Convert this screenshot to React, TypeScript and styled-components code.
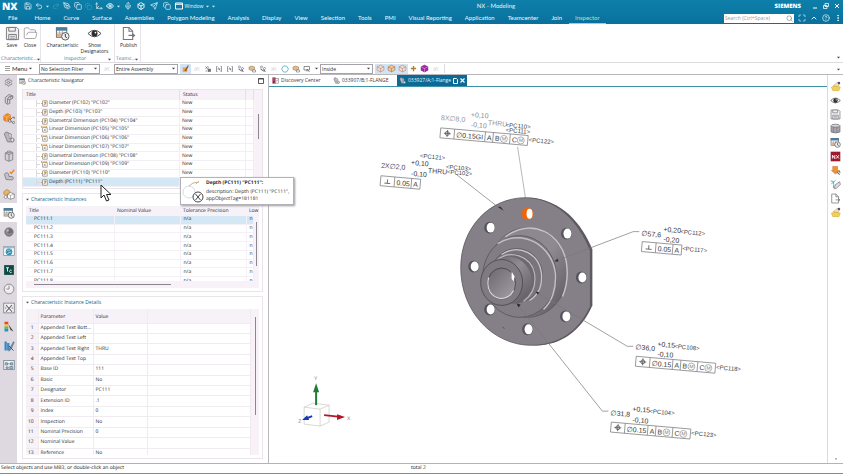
import React from "react";
import styled, { createGlobalStyle, css } from "styled-components";
import {
  Box,
  Copy,
  Eye,
  FolderOpen,
  Maximize,
  Mic,
  Move3d,
  PenTool,
  Redo2,
  Save,
  Search,
  Send,
  Settings,
  Undo2,
  ChevronUp,
  CircleHelp,
  MoreVertical,
} from "lucide-react";

/* ---------- base ---------- */

const UI = `"Open Sans", "Noto Sans", sans-serif`;
const BAR = `Lato, "Open Sans", sans-serif`;
const BLUE = "#0b77a3";

const Global = createGlobalStyle`
  * { box-sizing: border-box; }
  html, body { margin: 0; padding: 0; }
  body {
    background: #fff;
    color: #2b292d;
    font: 5px/9px ${UI};
    text-rendering: geometricPrecision;
    overflow: hidden;
  }
  button, input, select { font: inherit; color: inherit; margin: 0; padding: 0; border: 0; background: none; border-radius: 0; }
  table { border-collapse: collapse; border-spacing: 0; }
  svg { display: block; flex: none; }
`;

const Page = styled.div`
  height: 100vh;
  display: flex;
  flex-direction: column;
`;

const Caret = ({ size = 3, color = "#444" }: { size?: number; color?: string }) => (
  <svg width={size} height={size} viewBox="0 0 6 6">
    <path d="M0 1.5H6L3 5Z" fill={color} />
  </svg>
);

/* ---------- small drawings ---------- */

const glyphs: Record<string, React.ReactNode> = {
  part: (
    <g fill="#b9b6bb" stroke="#77747a" strokeWidth="1">
      <path d="M2 5a3 3 0 0 1 6-1l1 6 4 0a2.4 2.4 0 0 1 0 4.6L6 14.500Z" />
      <path d="M8 3l3 1v5l-2 1" fill="#dedbe0" />
      <ellipse cx="12.500" cy="12" rx="2" ry="2.400" fill="#eee" />
    </g>
  ),
  bracket: (
    <g fill="#d4d1d6" stroke="#6e6b70" strokeWidth="1">
      <path d="M3 6l5-4 5 2v3l-4 2v5l-3 1-3-2z" />
      <path d="M8 5l5-1M6 8v6M9 9l-3-1 2-3" fill="none" />
      <circle cx="11" cy="6" r="1.300" fill="#fff" />
    </g>
  ),
  orange: (
    <g>
      <path d="M1 5l5-3 4 2v6l-5 3-4-2z" fill="#f08a1d" stroke="#c96a10" strokeWidth=".7" />
      <path d="M1 5l4 2 5-3M5 7v6" stroke="#ffd09a" strokeWidth=".8" fill="none" />
      <path d="M9 11l4-4M13 7h2v2M10 12l4 3" stroke="#666" strokeWidth="1.200" fill="none" />
      <circle cx="9" cy="12" r="1.700" fill="#eee" stroke="#666" />
      <circle cx="14" cy="14" r="1.400" fill="#eee" stroke="#666" />
    </g>
  ),
  clip: (
    <g stroke="#77747a" fill="#d2cfd4">
      <path d="M3 4l4-2 6 1v10l-5 2-5-2z" />
      <path d="M3 4l5 2v9M8 6l5-2" fill="none" />
      <path d="M6 1.500h4v2H6z" fill="#eee" />
    </g>
  ),
  partCheck: (
    <g>
      <path d="M2 7a3 3 0 0 1 5-1l1 4 4 0a2.400 2.400 0 0 1 0 4.600L4 14Z" fill="#c4c1c6" stroke="#77747a" />
      <path d="M9 4l2 2 4-5" stroke="#e8862a" strokeWidth="1.800" fill="none" />
    </g>
  ),
  cubes: (
    <g strokeWidth=".8">
      <path d="M1 5l4-3 4 2v4l-4 2-4-2z" fill="#e8b765" stroke="#a47b35" />
      <path d="M6 8l4-2 5 2v5l-5 2-4-2z" fill="#fff" stroke="#666" />
      <path d="M6 8l4 2 5-2M10 10v5" fill="none" stroke="#888" />
      <circle cx="3.500" cy="12" r="2" fill="#fff" stroke="#666" />
    </g>
  ),
  charac: (
    <g>
      <rect x="1.500" y="2" width="11" height="10" fill="#fff" stroke="#66686c" />
      <rect x="1" y="1.500" width="12" height="3.500" fill="#4b7c98" />
      <path d="M2 7.500h10M5 5v7M8 5v7" stroke="#999" strokeWidth=".8" />
      <path d="M2 8.500h5v3H2z" fill="#dcae8a" />
      <circle cx="11" cy="11" r="4" fill="#f1f0f2" stroke="#55575c" />
      <path d="M11 8.500V11.500l1.700 1" stroke="#333" fill="none" />
    </g>
  ),
  sphere: (
    <g>
      <circle cx="8" cy="8" r="5.500" fill="#8b888e" stroke="#5c5a60" />
      <circle cx="9" cy="7" r="3" fill="#6d6b70" />
      <circle cx="6.200" cy="6" r="1.600" fill="#bbb8bd" />
    </g>
  ),
  globe: (
    <g>
      <rect x="1" y="2" width="14" height="12" fill="#fff" stroke="#7f8a92" />
      <rect x="1" y="2" width="14" height="2.500" fill="#a9b9c3" />
      <circle cx="8" cy="9" r="4.500" fill="#2c8fb8" />
      <path d="M5 8c2-3 3 1 5-2M6 12c1-3 3-1 5-3" stroke="#bfe3d0" fill="none" strokeWidth="1.200" />
    </g>
  ),
  tc: (
    <g>
      <rect x="1.500" y="1.500" width="13" height="13" fill="#0d4a44" />
      <path d="M4 5h4M6 5v5M11.500 8.500a1.700 1.700 0 1 0 0 2.600" stroke="#dff2ef" strokeWidth="1.300" fill="none" />
    </g>
  ),
  clock: (
    <g fill="none" stroke="#77747a">
      <circle cx="8" cy="8" r="6.500" fill="#efedf0" />
      <path d="M8 3.500V8H4.500" />
    </g>
  ),
  tools: (
    <g fill="none" stroke="#77757b">
      <rect x="1" y="1.500" width="14" height="13" fill="#f3f1f4" />
      <path d="M4 4l8 9M12 4l-8 9" stroke="#5f5d63" strokeWidth="1.500" />
      <path d="M2.500 8h2M11.500 8h2" strokeWidth="1.500" />
    </g>
  ),
  palette: (
    <g>
      <rect x="2" y="1" width="5" height="3.500" fill="#ee4136" />
      <rect x="2" y="4.500" width="5" height="3" fill="#f3c623" />
      <rect x="2" y="7.500" width="5" height="3" fill="#61bb46" />
      <rect x="2" y="10.500" width="5" height="3.500" fill="#2a8fd0" />
      <path d="M7 4l7 10-4-2z" fill="#444" />
    </g>
  ),
  books: (
    <g>
      <path d="M2 2h3v12H2zM5.500 4h3v10h-3z" fill="#3e86bd" />
      <path d="M14 2L9 11l-1 4 3-3 4-9z" fill="#6d8fa9" stroke="#43647f" strokeWidth=".6" />
      <path d="M8 8l6 6" stroke="#444" strokeWidth="1.200" />
    </g>
  ),
  process: (
    <g fill="#eef1f4" stroke="#6c7d8d">
      <rect x="1" y="2" width="14" height="12" />
      <path d="M3 5h3v3H3zM10 5h3v3h-3zM4 10.500h3v2H4zM9 10h4v3H9z" fill="#a9bccb" />
      <path d="M6 6.500h4" />
    </g>
  ),
  eye: (
    <g>
      <path d="M1 8q7-7 14 0q-7 7-14 0z" fill="#fff" stroke="#444" />
      <circle cx="8" cy="8" r="3.200" fill="#2c2c2f" />
      <circle cx="9" cy="7" r=".9" fill="#fff" />
    </g>
  ),
  hand: (
    <g>
      <path d="M2 9l6-3 7 3-2 5H4z" fill="#f2cf58" stroke="#c59b2c" strokeWidth=".6" />
      <path d="M5 7l5-5 4 2-3 4z" fill="#f8e6a0" stroke="#a98c4a" strokeWidth=".7" />
      <circle cx="13" cy="3" r="1.800" fill="#4d4f8e" />
    </g>
  ),
  disk: (
    <g fill="#f0eff1" stroke="#77757a">
      <path d="M1.500 1.500h11l2 2v11h-13z" />
      <path d="M4 1.500h7v4H4zM4 9h8v5.500H4z" />
      <path d="M5.500 11h5M5.500 13h5" strokeWidth=".8" />
    </g>
  ),
  cyl: (
    <g fill="#a7a5aa" stroke="#6a686d">
      <path d="M1.500 4v9q6.500 3 13 0V4" />
      <ellipse cx="8" cy="4" rx="6.500" ry="2.200" fill="#d6d4d8" />
      <path d="M5 6v8M10 6v8" strokeWidth=".7" />
    </g>
  ),
  nx: (
    <g>
      <rect x="1" y="1" width="14" height="14" fill="#9c1c2c" />
      <path d="M3.500 11V6l3.500 5V6M9 6l4 5M13 6l-4 5" stroke="#fff" strokeWidth="1.300" fill="none" />
    </g>
  ),
  orangeArrow: (
    <g>
      <path d="M4 2h7v6h3l-6 5-6-5h2z" fill="#ef9433" stroke="#b96a1c" strokeWidth=".7" />
      <path d="M10 10l4 4M13 9l2 2" stroke="#666" strokeWidth="1.500" />
    </g>
  ),
  sketch: (
    <g fill="none">
      <path d="M1 3q6-2 4 10M2 7l6-5" stroke="#3aa6b5" strokeWidth="1.300" />
      <path d="M8 8l6-4 1 4-6 6-3 0z" fill="#dcdade" stroke="#77757a" />
    </g>
  ),
  doc: (
    <g fill="#fff" stroke="#77757a" strokeWidth="1.100">
      <path d="M2.500 1.500h6l4 4v9h-10z" />
      <path d="M8.500 1.500v4h4M8 10h6M12 8l2.500 2-2.500 2" fill="none" />
    </g>
  ),
  disc: (
    <g>
      <rect x="1" y="1" width="7" height="14" fill="#8e2743" />
      <rect x="8" y="3" width="7" height="11" fill="#fff" stroke="#555" />
      <path d="M3 4h3M3 7h3M6 12l6-6M12 6v4" stroke="#e9c8d0" strokeWidth="1.200" />
      <path d="M9 11l4-5" stroke="#444" />
    </g>
  ),
  dim: (
    <g fill="none">
      <rect x="4" y="2" width="10" height="12" fill="#fff" stroke="#6b5f4d" strokeWidth="1.200" />
      <path d="M0 8h4M11 1l-4 5h5l-4 6" stroke="#c08a3c" strokeWidth="1.600" />
      <path d="M6 12l5-7" stroke="#555" strokeWidth="1.100" />
    </g>
  ),
  dimLinear: (
    <g fill="none">
      <rect x="4" y="4" width="10" height="10" fill="#fff" stroke="#6b5f4d" strokeWidth="1.200" />
      <path d="M1 2h12M1 0v5M13 0v4" stroke="#d19a3b" strokeWidth="1.600" />
      <path d="M6 12l5-6M7 7l4 5" stroke="#555" strokeWidth="1.100" />
    </g>
  ),
  cube: (
    <g strokeWidth="1">
      <path d="M2 5l6-3 6 3v6l-6 3-6-3z" fill="#f3dccf" stroke="#a08576" />
      <path d="M2 5l6 3 6-3M8 8v6" fill="none" stroke="#a08576" />
    </g>
  ),
  cubeOrange: (
    <g>
      <path d="M2 5l6-3 6 3v6l-6 3-6-3z" fill="#f6c98f" stroke="#8a7668" />
      <path d="M2 5l6 3 6-3M8 8v6" fill="none" stroke="#8a7668" />
    </g>
  ),
  cubePurple: (
    <g>
      <path d="M2 5l6-3 6 3v6l-6 3-6-3z" fill="#a326a8" stroke="#5c1260" />
      <path d="M2 5l6 3 6-3M8 8v6" fill="none" stroke="#e9a9ec" />
    </g>
  ),
  plus: <path d="M8 2v12M2 8h12" stroke="#b07b35" strokeWidth="3" />,
  faint: <path d="M2 10h5V6h6M3 6h3M9 10h4" stroke="#cfcdd1" strokeWidth="1.500" fill="none" />,
  brush: (
    <g>
      <path d="M3 6h8v8H3z" fill="#f1a04a" />
      <path d="M6 12l6-10 2 1-5 10z" fill="#8a6038" />
    </g>
  ),
  pick: (
    <g fill="none" stroke="#66646a" strokeWidth="1.300">
      <path d="M3 3l6 6M3 8l4-5 3 2" />
      <path d="M8 8h5v5H8z" fill="#77757a" />
      <path d="M3 12h3" />
    </g>
  ),
  span: (
    <g fill="none" stroke="#66646a" strokeWidth="1.300">
      <path d="M5 3H3v10h2M11 3h2v10h-2M5 8h6M7 5l3 6" />
    </g>
  ),
  pickNodes: (
    <g fill="none" stroke="#66646a" strokeWidth="1.200">
      <circle cx="5" cy="4" r="2" />
      <circle cx="11" cy="7" r="2" />
      <path d="M3 8l8 5M9 9l4 4" strokeWidth="2" />
    </g>
  ),
  hex: <path d="M5 2h6l4 6-4 6H5L1 8z" fill="#fff" stroke="#3fa9c6" strokeWidth="1.500" />,
  boxDown: (
    <g>
      <path d="M2 4l5-2 6 2v5l-5 2-6-2z" fill="#e6bd85" stroke="#886b45" />
      <path d="M9 10h6v4H9z" fill="#fff" stroke="#555" />
    </g>
  ),
  lasso: (
    <g fill="#fff" stroke="#555" strokeWidth="1.300">
      <path d="M2 3h11v7H2z" />
      <path d="M8 8l5 6M8 8v5" />
    </g>
  ),
};

const Glyph = ({ name, size }: { name: string; size: number }) => (
  <svg width={size} height={size} viewBox="0 0 16 16" aria-hidden="true">
    {glyphs[name]}
  </svg>
);

/* ---------- title bar ---------- */

const Header = styled.header`
  background: linear-gradient(#0d7fa9, ${BLUE} 60%, #0a6f9c);
  color: #e8f6fb;
  font-family: ${BAR};
  font-size: 6px;
`;

const TitleBar = styled.div`
  height: 12px;
  display: grid;
  grid-template-columns: 19fr auto 13fr;
  align-items: center;
  padding: 0 3px 0 2px;
`;

const Quick = styled.div`
  display: flex;
  align-items: center;
  gap: 3px;
`;

const Logo = styled.span`
  font: 800 10px/11px "Open Sans", sans-serif;
  color: #fff;
  margin-right: 3px;
`;

const IconButton = styled.button<{ $dim?: boolean; $wide?: boolean }>`
  display: flex;
  align-items: center;
  gap: 2px;
  padding: ${(p) => (p.$wide ? "0 1px" : "0")};
  opacity: ${(p) => (p.$dim ? 0.25 : 1)};
`;

const QuickLabel = styled.span`
  font: 5px/9px ${UI};
`;

const WindowButtons = styled.div`
  display: flex;
  justify-content: flex-end;
  align-items: center;
  gap: 5px;
`;

const Siemens = styled.span`
  font: 800 6px/9px "Open Sans", sans-serif;
  color: #fff;
  margin-right: 6px;
`;

const MenuBar = styled.nav`
  height: 12px;
  display: flex;
  align-items: stretch;
  gap: 1px;
  padding-left: 2px;
`;

const MenuTab = styled.button<{ $active?: boolean }>`
  padding: 0 6px;
  line-height: 11px;
  border-bottom: 1px solid ${(p) => (p.$active ? "#a9cfa5" : "transparent")};
  color: ${(p) => (p.$active ? "#c9dcae" : "#eef8fb")};
  white-space: nowrap;
  &:first-child {
    padding-right: 10px;
  }
`;

const MenuTools = styled.div`
  margin-left: auto;
  display: flex;
  align-items: center;
  gap: 4px;
  padding-right: 1px;
`;

const SearchBox = styled.label`
  display: flex;
  align-items: center;
  width: 70px;
  height: 9px;
  background: #fff;
  color: #777;
  padding: 0 1px;
  input {
    flex: 1;
    min-width: 0;
    height: 8px;
    font: 5px/8px ${UI};
    outline: none;
  }
  input::placeholder {
    color: #9b9b9b;
    opacity: 1;
  }
`;

const menu = [
  "File", "Home", "Curve", "Surface", "Assemblies", "Polygon Modeling", "Analysis", "Display", "View",
  "Selection", "Tools", "PMI", "Visual Reporting", "Application", "Teamcenter", "Join", "Inspector",
];

/* ---------- ribbon ---------- */

const Ribbon = styled.div`
  display: flex;
  height: 39px;
  border-bottom: 1px solid #dddbdf;
  padding-right: 3px;
`;

const Group = styled.section<{ $w: number }>`
  width: ${(p) => p.$w}px;
  display: flex;
  flex-direction: column;
  border-right: 1px solid #e6e4e8;
  padding-top: 2px;
`;

const GroupItems = styled.div`
  flex: 1;
  display: flex;
  justify-content: center;
  align-items: flex-start;
  padding-left: 2px;
`;

const Tool = styled.button<{ $w: number }>`
  width: ${(p) => p.$w}px;
  display: flex;
  flex-direction: column;
  align-items: center;
  line-height: 6px;
  gap: 1px;
`;

const GroupLabel = styled.div`
  display: flex;
  align-items: center;
  height: 6px;
  padding: 0 3px 0 1px;
  color: #3a7b9b;
  line-height: 6px;
  span {
    flex: 1;
    text-align: center;
    white-space: nowrap;
  }
`;

const RibbonEnd = styled.button`
  margin-left: auto;
  align-self: flex-end;
  padding-bottom: 3px;
`;

/* ---------- selection bar ---------- */

const SelectionBar = styled.div`
  display: flex;
  align-items: center;
  height: 12px;
  padding: 0 3px 0 5px;
  border-bottom: 1px solid #b9b7bc;
`;

const MenuButton = styled.button`
  display: flex;
  align-items: center;
  gap: 2px;
  width: 34px;
  font-size: 6px;
  font-family: ${BAR};
`;

const SelectWrap = styled.span<{ $w: number }>`
  width: ${(p) => p.$w}px;
  display: grid;
  align-items: center;
  border: 1px solid #a5a3a8;
  height: 10px;
  background: #fff;
  select,
  svg {
    grid-area: 1 / 1;
  }
  select {
    appearance: none;
    width: 100%;
    height: 8px;
    line-height: 8px;
    padding: 0 8px 0 1px;
    outline: none;
  }
  svg {
    justify-self: end;
    margin-right: 2px;
    pointer-events: none;
  }
`;

const Pick = styled.button<{ $on?: boolean; $w?: number }>`
  width: ${(p) => p.$w ?? 11}px;
  height: 10px;
  display: flex;
  align-items: center;
  justify-content: center;
  background: ${(p) => (p.$on ? "#d3e3f3" : "none")};
`;

const Divider = styled.span`
  width: 1px;
  height: 9px;
  background: #dddbdf;
  margin-left: 3px;
`;

/* ---------- body ---------- */

const Work = styled.div`
  flex: 1;
  min-height: 0;
  display: flex;
`;

const Rail = styled.nav`
  width: 17px;
  background: #ded8e0;
  display: flex;
  flex-direction: column;
`;

const RailButton = styled.button<{ $active?: boolean }>`
  height: 19px;
  display: flex;
  align-items: center;
  justify-content: center;
  background: ${(p) => (p.$active ? "#fff" : "none")};
`;

const RailTop = styled(RailButton)`
  height: 14px;
`;

const Panel = styled.aside`
  width: 252px;
  position: relative;
  display: flex;
  flex-direction: column;
  border-right: 1px solid #b9b7bc;
`;

const PanelHead = styled.div`
  display: flex;
  align-items: center;
  gap: 2px;
  height: 12px;
  padding: 0 4px 0 2px;
  h1 {
    flex: 1;
    margin: 0;
    font: inherit;
  }
`;

const PanelBody = styled.div`
  flex: 1;
  min-height: 0;
  display: flex;
  flex-direction: column;
  gap: 4px;
  padding: 2px 5px 4px;
`;

const frame = css`
  border: 1px solid #e9e5ea;
  display: flex;
  flex-direction: column;
`;

const TreeFrame = styled.section`
  ${frame}
  height: 100px;
  overflow: hidden;
`;

const Section = styled.section<{ $grow?: boolean }>`
  ${frame}
  padding: 0 3px 3px;
  min-height: 0;
  height: ${(p) => (p.$grow ? "auto" : "99px")};
  flex: ${(p) => (p.$grow ? "1" : "none")};
`;

const SectionTitle = styled.button`
  display: flex;
  align-items: flex-start;
  gap: 2px;
  height: 12px;
  line-height: 10px;
  color: #17637f;
  svg {
    margin-top: 4px;
  }
`;

const Clip = styled.div`
  flex: 1;
  min-height: 0;
  overflow: hidden;
  display: flex;
  align-items: flex-start;
  background: #f8f2f8;
`;

const cell = css`
  overflow: hidden;
  white-space: nowrap;
  text-align: left;
  font-weight: 400;
  padding: 0 3px;
  line-height: 7px;
`;

const Sheet = styled.table`
  flex: 1;
  width: 100%;
  min-width: 0;
  table-layout: fixed;
`;

const Tree = styled(Sheet)`
  height: 106px;
  thead th {
    ${cell}
    height: 10px;
    background: #f7f1f8;
    border-right: 1px solid #e6dfe8;
  }
  td {
    ${cell}
    padding: 0 2px;
    background: #fff;
    border-bottom: 1px solid #f2eef3;
    border-right: 1px solid #f2eef3;
  }
`;

const TreeCell = styled.span`
  display: flex;
  align-items: center;
  gap: 1px;
  margin-left: 11px;
  border-left: 1px solid #dcd9de;
  height: 7px;
  &::before {
    content: "";
    width: 3px;
    height: 1px;
    background: #dcd9de;
  }
`;

const Row = styled.tr<{ $sel?: boolean }>`
  ${(p) => p.$sel && css`&& td { background: #d3e7f5; }`}
`;

const InstanceTable = styled(Sheet)`
  height: 80px;
  th {
    ${cell}
    overflow: visible;
    height: 10px;
    padding-top: 1px;
    background: #f7f1f8;
  }
  td {
    ${cell}
    background: #fff;
    border-bottom: 1px solid #f4f0f5;
    border-right: 1px solid #f4f0f5;
  }
  td:first-child {
    padding-left: 8px;
  }
`;

const DetailTable = styled(Sheet)`
  height: 150px;
  th,
  td {
    ${cell}
    padding: 0 2px;
    border-bottom: 1px solid #f0ebf1;
    border-right: 1px solid #f0ebf1;
  }
  thead th {
    height: 14px;
    padding-top: 4px;
    background: #f7f1f8;
  }
  tbody th {
    text-align: right;
    background: #f7f1f8;
    padding-right: 4px;
  }
  td {
    background: #fff;
  }
`;

const VTrack = styled.div<{ $w: number; $top: number }>`
  width: ${(p) => p.$w}px;
  padding-top: ${(p) => p.$top}px;
  display: flex;
  justify-content: center;
`;

const VThumb = styled.div<{ $h: number }>`
  width: 1px;
  height: ${(p) => p.$h}px;
  background: #8e868f;
`;

const HTrack = styled.div`
  height: 7px;
  background: #f8f2f8;
  padding: 3px 0 0 8px;
`;

const HThumb = styled.div`
  width: 61%;
  height: 1px;
  background: #8e868f;
`;

const Tooltip = styled.div`
  position: absolute;
  left: 163px;
  top: 102px;
  z-index: 2;
  display: flex;
  align-items: center;
  gap: 2px;
  height: 28px;
  padding: 0 4px 0 1px;
  background: #fff;
  border: 1px solid #b4b2b7;
  box-shadow: 1px 1px 2px #9a989d;
  line-height: 7px;
  white-space: nowrap;
  b {
    display: block;
    font-weight: 700;
    margin-bottom: 2px;
  }
`;

const Pointer = styled.svg`
  position: absolute;
  left: 83px;
  top: 109px;
  z-index: 3;
`;

/* ---------- canvas side ---------- */

const Stage = styled.main`
  flex: 1;
  min-width: 0;
  display: flex;
  flex-direction: column;
`;

const DocTabs = styled.div`
  display: flex;
  height: 12px;
  border-bottom: 1px solid #3f93a8;
  padding-left: 1px;
`;

const DocTab = styled.button<{ $active?: boolean; $w: number }>`
  display: flex;
  align-items: center;
  gap: 2px;
  width: ${(p) => p.$w}px;
  padding-left: 2px;
  white-space: nowrap;
  background: ${(p) => (p.$active ? "#0b6a96" : "none")};
  color: ${(p) => (p.$active ? "#e6f3f8" : "#3a383c")};
`;

const Canvas = styled.svg`
  flex: 1;
  min-height: 0;
  width: 100%;
`;

const RightRail = styled.nav`
  width: 16px;
  border-left: 1px solid #dcdadf;
  padding-top: 4px;
  display: flex;
  flex-direction: column;
  align-items: center;
`;

const RightButton = styled.button`
  height: 14px;
  display: flex;
  align-items: center;
`;

const RightMore = styled.button`
  margin-top: auto;
  padding-bottom: 3px;
`;

const StatusBar = styled.footer`
  display: grid;
  grid-template-columns: 410px 1fr;
  height: 11px;
  padding-left: 1px;
  border-top: 1px solid #b4b2b7;
  border-bottom: 1px solid #5d98ad;
  color: #111;
  line-height: 9px;
`;

/* ---------- data ---------- */

const tree: [string, string][] = [
  ['Diameter (PC102) "PC102"', "dim"],
  ['Depth (PC103) "PC103"', "dim"],
  ['Diametral Dimension (PC104) "PC104"', "dim"],
  ['Linear Dimension (PC105) "PC105"', "dimLinear"],
  ['Linear Dimension (PC106) "PC106"', "dimLinear"],
  ['Linear Dimension (PC107) "PC107"', "dimLinear"],
  ['Diametral Dimension (PC108) "PC108"', "dim"],
  ['Linear Dimension (PC109) "PC109"', "dimLinear"],
  ['Diameter (PC110) "PC110"', "dim"],
  ['Depth (PC111) "PC111"', "dim"],
  ["", "dim"],
];

const details: [string, string][] = [
  ["Appended Text Bott...", ""],
  ["Appended Text Left", ""],
  ["Appended Text Right", "THRU"],
  ["Appended Text Top", ""],
  ["Base ID", "111"],
  ["Basic", "No"],
  ["Designator", "PC111"],
  ["Extension ID", ".1"],
  ["Index", "0"],
  ["Inspection", "No"],
  ["Nominal Precision", "0"],
  ["Nominal Value", ""],
  ["Reference", "No"],
];

const leftRail = [
  "bracket", "orange", "part", "clip", "partCheck", "cubes", "charac", "sphere",
  "globe", "tc", "clock", "tools", "palette", "books", "process",
];
const rightRail = ["hand", "eye", "disk", "cyl", "charac", "nx", "orangeArrow", "sketch", "doc", "hand"];

/* ---------- model drawing ---------- */

const Label = styled.text<{ $size?: number; $tone?: string }>`
  font-family: "Liberation Sans", Arial, sans-serif;
  font-size: ${(p) => p.$size ?? 6}px;
  fill: ${(p) => p.$tone ?? "#38383a"};
`;

type FrameCell = { x: number; w: number; text: string; mod?: boolean };

const ToleranceFrame = ({ x, y, symbol, cells }: { x: number; y: number; symbol: "pos" | "perp"; cells: FrameCell[] }) => {
  const last = cells[cells.length - 1];
  return (
    <g transform={`translate(${x} ${y}) rotate(5)`}>
      <rect width={last.x + last.w} height="10" fill="#fff" stroke="#858487" strokeWidth="0.8" />
      <g fill="none" stroke="#555" strokeWidth="0.8">
        {symbol === "pos" ? (
          <>
            <circle cx="7" cy="5" r="2" />
            <path d="M3.500 5h7M7 1.500v7" />
          </>
        ) : (
          <path d="M4 7h6M7 7V3" />
        )}
      </g>
      {cells.map((c) => (
        <g key={c.x}>
          <path d={`M${c.x} 0V10`} stroke="#858487" strokeWidth="0.8" />
          <Label x={c.x + 2} y={8} $size={7}>{c.text}</Label>
          {c.mod && (
            <>
              <circle cx={c.x + 11} cy="5.500" r="3.500" fill="none" stroke="#858487" strokeWidth="0.600" />
              <Label x={c.x + 9} y={7} $size={5} $tone="#77767a">M</Label>
            </>
          )}
        </g>
      ))}
    </g>
  );
};

const perpCells: FrameCell[] = [
  { x: 14, w: 17, text: "0.05" },
  { x: 31, w: 9, text: "A" },
];
const posCells: FrameCell[] = [
  { x: 14, w: 23, text: "∅0.15" },
  { x: 37, w: 8, text: "A" },
  { x: 45, w: 17, text: "B", mod: true },
  { x: 62, w: 18, text: "C", mod: true },
];
const topCells: FrameCell[] = [
  { x: 14, w: 31, text: "∅0.15GI" },
  { x: 45, w: 8, text: "A" },
  { x: 53, w: 17, text: "B", mod: true },
  { x: 70, w: 18, text: "C", mod: true },
];

const Tilted = ({ x, y, size, tone, children }: { x: number; y: number; size?: number; tone?: string; children: string }) => (
  <Label $size={size} $tone={tone} transform={`translate(${x} ${y}) rotate(5)`}>{children}</Label>
);

const holes = [
  [567, 233], [582, 277], [566, 316], [528, 329], [490, 309], [474, 266], [490, 227],
];

const Model = () => (
  <Canvas viewBox="269 86 559 377" role="img" aria-label="Flange model">
    <defs>
      <linearGradient id="tube" x1=".2" y1="0" x2="1" y2=".9">
        <stop offset="0" stopColor="#6f6a72" />
        <stop offset=".4" stopColor="#918c94" />
        <stop offset="1" stopColor="#5d5960" />
      </linearGradient>
      <linearGradient id="bore" x1="0" y1="0" x2="1" y2="1">
        <stop offset="0" stopColor="#6b666e" />
        <stop offset="1" stopColor="#a5a0a8" />
      </linearGradient>
      <linearGradient id="step" x1="0" y1="0" x2="1" y2=".8">
        <stop offset="0" stopColor="#8a858d" />
        <stop offset=".6" stopColor="#8f8a92" />
        <stop offset="1" stopColor="#635e66" />
      </linearGradient>
    </defs>

    <path d="M518 146L526 198" stroke="#9b9a9c" strokeWidth=".7" />

    <path d="M530 197C562 199 582 222 593 249V305C582 330 562 345 536 345Z" fill="#5d5960" />
    <path
      d="M526 197C556 197 579 220 591 250V306C579 332 558 345 532 345C493 345 461 311 461 267C461 228 489 197 526 197Z"
      fill="#858088"
      stroke="#59555c"
      strokeWidth=".8"
    />

    <ellipse cx="528" cy="213" rx="6" ry="6" fill="#f0640c" />
    <ellipse cx="530" cy="213" rx="3" ry="5" fill="#fff" />
    {holes.map(([x, y]) => (
      <g key={`${x}-${y}`}>
        <ellipse cx={x} cy={y} rx="5.500" ry="6" fill="#57535a" />
        <ellipse cx={x + 1} cy={y} rx="4" ry="5" fill="#fff" />
      </g>
    ))}

    <ellipse cx="528" cy="272" rx="40" ry="45" fill="url(#step)" stroke="#57535a" strokeWidth=".7" />
    <path d="M506 236C534 216 562 234 567 262C569 276 567 287 563 296" fill="none" stroke="#c5c1c8" strokeWidth="1.500" />
    <ellipse cx="520" cy="276" rx="37" ry="41" fill="#827d85" stroke="#57535a" strokeWidth=".8" />
    <path d="M498 243C524 227 553 246 556 273C557 289 552 302 544 309" fill="none" stroke="#c2bec5" strokeWidth="1.500" />
    <ellipse cx="517" cy="275" rx="26" ry="27" fill="#79747c" stroke="#57535a" strokeWidth=".7" />
    <path d="M502 254C520 242 540 254 542 273C543 286 538 295 530 300" fill="none" stroke="#c9c5cc" strokeWidth="1.300" />
    <ellipse cx="514" cy="277" rx="22" ry="24" fill="#6c6770" />
    <path d="M497 260C511 248 532 256 535 273C537 286 532 295 524 301" fill="none" stroke="#bcb7bf" strokeWidth="1.200" />
    <path d="M489 264L498 259C514 251 530 262 532 278C533 291 526 299 518 303L507 304Z" fill="url(#tube)" />
    <ellipse cx="502" cy="282" rx="21" ry="23" fill="#7f7a82" stroke="#4d4a50" strokeWidth=".9" />
    <ellipse cx="502" cy="283" rx="14" ry="15.500" fill="url(#bore)" stroke="#403d43" strokeWidth=".8" />
    <path d="M489 277C486 289 492 297 501 298C508 298 512 294 514 290" fill="none" stroke="#e3e0e5" strokeWidth="1.100" />
    <path d="M512 271L515 276L514 281L512 278Z" fill="#fff" />
    <path d="M503 327l2 1" stroke="#57535a" strokeWidth="1" />

    <g fill="none" stroke="#77767a" strokeWidth=".7">
      <path d="M457 174L503 210" />
      <path d="M555 261L634 231H640" />
      <path d="M537 292L628 346H634" />
      <path d="M518 304L603 411H609" />
    </g>
    <g fill="#2c2b2e">
      <path d="M498 206l3 0 3 4z" />
      <path d="M555 261l3-3 1 3z" />
      <path d="M536 291l4 1-2 2z" />
      <path d="M517 303l4 1-2 3z" />
    </g>

    <Tilted x={441} y={119} size={7} tone="#98979a">8X∅8,0</Tilted>
    <Tilted x={471} y={116} size={7} tone="#8d8c8f">+0,10</Tilted>
    <Tilted x={471} y={126} size={7} tone="#8d8c8f">-0,10</Tilted>
    <Tilted x={488} y={124} size={7} tone="#98979a">THRU</Tilted>
    <Tilted x={506} y={126}>{"<PC110>"}</Tilted>
    <Tilted x={506} y={131}>{"<PC111>"}</Tilted>
    <ToleranceFrame x={441} y={127} symbol="pos" cells={topCells} />
    <Tilted x={529} y={141}>{"<PC122>"}</Tilted>

    <Tilted x={420} y={157}>{"<PC121>"}</Tilted>
    <Tilted x={381} y={167} size={7} tone="#48474a">2X∅2,0</Tilted>
    <Tilted x={411} y={164} size={7}>+0,10</Tilted>
    <Tilted x={411} y={175} size={7}>-0,10</Tilted>
    <Tilted x={428} y={172} size={7} tone="#48474a">THRU</Tilted>
    <Tilted x={446} y={168}>{"<PC103>"}</Tilted>
    <Tilted x={447} y={173}>{"<PC102>"}</Tilted>
    <ToleranceFrame x={381} y={175} symbol="perp" cells={perpCells} />

    <Tilted x={642} y={235} size={7}>∅57,6</Tilted>
    <Tilted x={664} y={231} size={7}>+0,20</Tilted>
    <Tilted x={681} y={233}>{"<PC112>"}</Tilted>
    <Tilted x={664} y={241} size={7}>-0,20</Tilted>
    <ToleranceFrame x={643} y={241} symbol="perp" cells={perpCells} />
    <Tilted x={683} y={250}>{"<PC117>"}</Tilted>

    <Tilted x={636} y={349} size={7}>∅36,0</Tilted>
    <Tilted x={658} y={346} size={7}>+0,15</Tilted>
    <Tilted x={675} y={348}>{"<PC108>"}</Tilted>
    <Tilted x={658} y={356} size={7}>-0,10</Tilted>
    <ToleranceFrame x={637} y={356} symbol="pos" cells={posCells} />
    <Tilted x={717} y={369}>{"<PC118>"}</Tilted>

    <Tilted x={611} y={415} size={7}>∅31,8</Tilted>
    <Tilted x={633} y={411} size={7}>+0,15</Tilted>
    <Tilted x={650} y={413}>{"<PC104>"}</Tilted>
    <Tilted x={633} y={422} size={7}>-0,10</Tilted>
    <ToleranceFrame x={612} y={422} symbol="pos" cells={posCells} />
    <Tilted x={692} y={435}>{"<PC123>"}</Tilted>

    <g fill="none" stroke="#c9c7c0" strokeWidth=".7">
      <path d="M304 407L320 409V426L304 424ZM320 409L329 405V422L320 426M304 407L313 403L329 405" />
    </g>
    <path d="M316 405V390" stroke="#1f7a33" strokeWidth="2" />
    <path d="M316 383L319 392H313Z" fill="#1f7a33" />
    <path d="M324 415L338 416.500" stroke="#b01626" strokeWidth="2" />
    <path d="M345 417L337 420V414Z" fill="#b01626" />
    <path d="M312 416L307 418" stroke="#1539b5" strokeWidth="2" />
    <path d="M302 420L307 415L309 420Z" fill="#1539b5" />
    <Label x={314} y={380} $size={5} $tone="#777">Y</Label>
    <Label x={347} y={420} $size={5} $tone="#777">X</Label>
    <Label x={298} y={423} $size={5} $tone="#777">Z</Label>
  </Canvas>
);

/* ---------- page ---------- */

export default function App() {
  return (
    <Page>
      <Global />
      <Header>
        <TitleBar>
          <Quick>
            <Logo>NX</Logo>
            <IconButton aria-label="Save"><Save size={8} /></IconButton>
            <IconButton aria-label="Undo"><Undo2 size={8} /></IconButton>
            <Caret color="#d5ebf3" />
            <IconButton aria-label="Redo" $dim><Redo2 size={8} /></IconButton>
            <IconButton aria-label="Cut"><PenTool size={8} /></IconButton>
            <IconButton aria-label="Copy"><Copy size={8} /></IconButton>
            <IconButton aria-label="Paste" $dim><Copy size={7} /></IconButton>
            <IconButton aria-label="Move"><Move3d size={8} /></IconButton>
            <IconButton aria-label="Show"><Eye size={8} strokeWidth={3} /></IconButton>
            <Caret color="#d5ebf3" />
            <IconButton aria-label="Voice" $wide><Mic size={8} /></IconButton>
            <IconButton aria-label="Orient" $wide><Box size={8} strokeWidth={3} /></IconButton>
            <IconButton aria-label="Send" $wide><Send size={8} /></IconButton>
            <IconButton aria-label="Switch window" $wide><Copy size={8} /></IconButton>
            <IconButton>
              <svg width="8" height="8" viewBox="0 0 16 16"><path d="M1 2h14v12H1zM1 4.500h14" fill="none" stroke="#fff" strokeWidth="2" /></svg>
              <QuickLabel>Window</QuickLabel>
            </IconButton>
            <Caret color="#d5ebf3" />
            <Caret color="#d5ebf3" />
          </Quick>
          <span>NX - Modeling</span>
          <WindowButtons>
            <Siemens>SIEMENS</Siemens>
            <IconButton aria-label="Minimize">
              <svg width="6" height="6" viewBox="0 0 6 6"><path d="M1 5h4" stroke="#fff" /></svg>
            </IconButton>
            <IconButton aria-label="Restore">
              <svg width="6" height="6" viewBox="0 0 12 12"><path d="M4 1h7v6H4zM1 5h7v6H1z" fill="none" stroke="#fff" strokeWidth="1.500" /></svg>
            </IconButton>
            <IconButton aria-label="Close">
              <svg width="6" height="6" viewBox="0 0 6 6"><path d="M1 1l4 4M5 1L1 5" stroke="#fff" /></svg>
            </IconButton>
          </WindowButtons>
        </TitleBar>
        <MenuBar>
          {menu.map((m) => (
            <MenuTab key={m} $active={m === "Inspector"}>{m}</MenuTab>
          ))}
          <MenuTools>
            <SearchBox>
              <input aria-label="Search" placeholder="Search (Ctrl+Space)" />
              <Search size={7} />
            </SearchBox>
            <IconButton aria-label="Full screen"><Maximize size={8} /></IconButton>
            <IconButton aria-label="Collapse ribbon"><ChevronUp size={8} strokeWidth={3} /></IconButton>
            <IconButton aria-label="Help"><CircleHelp size={8} /></IconButton>
            <IconButton aria-label="More"><MoreVertical size={8} strokeWidth={3} /></IconButton>
          </MenuTools>
        </MenuBar>
      </Header>

      <Ribbon>
        <Group $w={41}>
          <GroupItems>
            <Tool $w={18}><Glyph name="disk" size={15} />Save</Tool>
            <Tool $w={18}><FolderOpen size={15} strokeWidth={1} color="#77757a" />Close</Tool>
          </GroupItems>
          <GroupLabel><span>Characteristic...</span><Caret /></GroupLabel>
        </Group>
        <Group $w={74}>
          <GroupItems>
            <Tool $w={32}><Glyph name="charac" size={15} />Characteristic</Tool>
            <Tool $w={32}><Glyph name="eye" size={15} />Show Designators</Tool>
          </GroupItems>
          <GroupLabel><span>Inspector</span><Caret /></GroupLabel>
        </Group>
        <Group $w={26}>
          <GroupItems>
            <Tool $w={24}><Glyph name="doc" size={15} />Publish</Tool>
          </GroupItems>
          <GroupLabel><span>Teamc...</span><Caret /></GroupLabel>
        </Group>
        <RibbonEnd aria-label="Ribbon options"><Caret /></RibbonEnd>
      </Ribbon>

      <SelectionBar>
        <MenuButton>
          <svg width="5" height="5" viewBox="0 0 5 5"><path d="M0 .5h5M0 2.500h5M0 4.500h5" stroke="#777" strokeWidth=".7" /></svg>
          Menu <Caret />
        </MenuButton>
        <SelectWrap $w={61}>
          <select aria-label="Selection filter"><option>No Selection Filter</option></select>
          <Caret />
        </SelectWrap>
        <Pick $w={14} aria-label="Filter"><Glyph name="faint" size={8} /></Pick>
        <SelectWrap $w={64}>
          <select aria-label="Selection scope"><option>Entire Assembly</option></select>
          <Caret />
        </SelectWrap>
        <Pick $w={2} aria-hidden="true" />
        <Pick $on aria-label="Highlight"><Glyph name="brush" size={9} /></Pick>
        {["faint", "pick", "span", "span", "pickNodes", "boxDown", "pickNodes", "faint", "hex", "boxDown", "lasso"].map((n, i) => (
          <Pick key={i} aria-label={`Selection tool ${i + 1}`}><Glyph name={n} size={8} /></Pick>
        ))}
        <Pick $w={8} aria-label="More shapes"><Caret /></Pick>
        <SelectWrap $w={53}>
          <select aria-label="Selection rule"><option>Inside</option></select>
          <Caret />
        </SelectWrap>
        <Pick $w={2} aria-hidden="true" />
        <Pick $on aria-label="Faces"><Glyph name="cube" size={9} /></Pick>
        <Pick $on aria-label="Edges"><Glyph name="cubeOrange" size={9} /></Pick>
        <Pick $on aria-label="Bodies"><Glyph name="cube" size={9} /></Pick>
        <Pick aria-label="Add"><Glyph name="plus" size={7} /></Pick>
        <Pick aria-label="Solid"><Glyph name="cubePurple" size={9} /></Pick>
        <Pick aria-label="Link"><Glyph name="faint" size={8} /></Pick>
        <Divider />
        <RibbonEnd aria-label="Bar options"><Caret /></RibbonEnd>
      </SelectionBar>

      <Work>
        <Rail>
          <RailTop aria-label="Settings"><Settings size={9} color="#77747a" /></RailTop>
          {leftRail.map((n) => (
            <RailButton key={n} $active={n === "charac"} aria-label={n}><Glyph name={n} size={12} /></RailButton>
          ))}
        </Rail>

        <Panel>
          <PanelHead>
            <Glyph name="charac" size={7} />
            <h1>Characteristic Navigator</h1>
            <IconButton aria-label="Maximize panel">
              <svg width="6" height="6" viewBox="0 0 6 6"><path d="M.5.500h5v5h-5zM.5 1h5" fill="none" stroke="#333" strokeWidth=".8" /></svg>
            </IconButton>
          </PanelHead>
          <PanelBody>
            <TreeFrame>
              <Clip>
                <Tree>
                  <colgroup><col /><col width="66" /><col width="8" /></colgroup>
                  <thead><tr><th>Title</th><th>Status</th><th /></tr></thead>
                  <tbody>
                    {tree.map(([label, icon], i) => (
                      <Row key={i} $sel={i === 9}>
                        <td><TreeCell><Glyph name={icon} size={7} />{label}</TreeCell></td>
                        <td>{i < 10 ? "New" : ""}</td>
                        <td />
                      </Row>
                    ))}
                  </tbody>
                </Tree>
                <VTrack $w={8} $top={24}><VThumb $h={25} /></VTrack>
              </Clip>
            </TreeFrame>

            <Section>
              <SectionTitle><Caret color="#3f5f70" />Characteristic Instances</SectionTitle>
              <Clip>
                <InstanceTable>
                  <colgroup><col width="88" /><col width="66" /><col width="66" /><col /></colgroup>
                  <thead><tr><th>Title</th><th>Nominal Value</th><th>Tolerance Precision</th><th>Low</th></tr></thead>
                  <tbody>
                    {[1, 2, 3, 4, 5, 6, 7, 8].map((n) => (
                      <Row key={n} $sel={n === 1}>
                        <td>PC111.{n}</td><td /><td>n/a</td><td>n</td>
                      </Row>
                    ))}
                  </tbody>
                </InstanceTable>
                <VTrack $w={5} $top={16}><VThumb $h={44} /></VTrack>
              </Clip>
              <HTrack><HThumb /></HTrack>
            </Section>

            <Section $grow>
              <SectionTitle><Caret color="#3f5f70" />Characteristic Instance Details</SectionTitle>
              <Clip>
                <DetailTable>
                  <colgroup><col width="12" /><col width="55" /><col width="54" /><col /></colgroup>
                  <thead><tr><th /><th>Parameter</th><th>Value</th><th /></tr></thead>
                  <tbody>
                    {details.map(([k, v], i) => (
                      <tr key={k}><th>{i + 1}</th><td>{k}</td><td>{v}</td><td /></tr>
                    ))}
                  </tbody>
                </DetailTable>
                <VTrack $w={8} $top={8}><VThumb $h={98} /></VTrack>
              </Clip>
            </Section>
          </PanelBody>

          <Tooltip role="tooltip">
            <svg width="22" height="24" viewBox="0 0 22 24">
              <circle cx="7" cy="13" r="6" fill="none" stroke="#c5d3da" strokeWidth=".8" />
              <path d="M7 7l4-3 6-1M14 5l3-3" fill="none" stroke="#cdb48a" strokeWidth="1" />
              <circle cx="16" cy="18" r="5" fill="#fff" stroke="#333" strokeWidth=".9" />
              <path d="M13.500 15l5 6M18.500 15l-5 6" stroke="#333" strokeWidth=".9" />
            </svg>
            <div>
              <b>Depth (PC111) "PC111":</b>
              description: Depth (PC111) "PC111",
              <br />
              appObjectTag=181181
            </div>
          </Tooltip>
          <Pointer width="12" height="18" viewBox="0 0 12 18">
            <path d="M1 1V14L4 11L6.500 17L9 16L6.500 10.500H11Z" fill="#fff" stroke="#222" strokeWidth="1" />
          </Pointer>
        </Panel>

        <Stage>
          <DocTabs>
            <DocTab $w={61}><Glyph name="disc" size={7} />Discovery Center</DocTab>
            <DocTab $w={66}><Glyph name="part" size={7} />033907/B;1-FLANGE</DocTab>
            <DocTab $w={70} $active>
              <Glyph name="part" size={7} />033927/A;1-Flange
              <svg width="5" height="6" viewBox="0 0 5 6"><path d="M.5.500h3l1 1v4h-4z" fill="none" stroke="#fff" /></svg>
              <svg width="5" height="5" viewBox="0 0 5 5"><path d="M.5.500l4 4M4.500.500l-4 4" stroke="#fff" strokeWidth="1.200" /></svg>
            </DocTab>
          </DocTabs>
          <Model />
        </Stage>

        <RightRail>
          {rightRail.map((n, i) => (
            <RightButton key={i} aria-label={n}><Glyph name={n} size={11} /></RightButton>
          ))}
          <RightMore aria-label="More tools"><Caret size={2} /></RightMore>
        </RightRail>
      </Work>

      <StatusBar>
        <span>Select objects and use MB3, or double-click an object</span>
        <span>total 2</span>
      </StatusBar>
    </Page>
  );
}
